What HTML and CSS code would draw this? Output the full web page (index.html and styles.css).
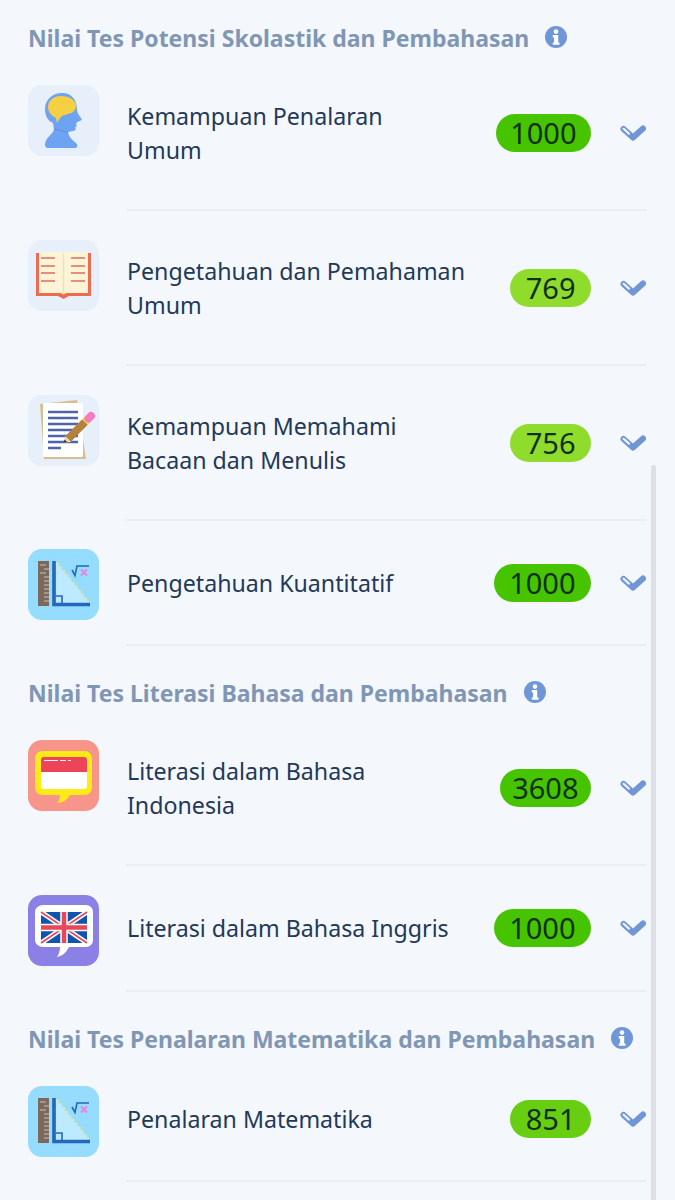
FILE: index.html
```html
<!DOCTYPE html>
<html lang="en">

<head>
	<meta charset="UTF-8">
	<title>Nilai Tes</title>
	<link rel="stylesheet" href="styles.css">
</head>

<body>
	<svg class="defs" width="0" height="0">
		<symbol id="chev" viewBox="0 0 26 18">
			<path d="M3.500 5 L13 13.500 L23 4.500" fill="none" stroke="#7096d6" stroke-width="6" stroke-linecap="round" stroke-linejoin="round"/>
			<path d="M3.600 4.800 L9 9.600" fill="none" stroke="#eef3fb" stroke-width="2.200" stroke-linecap="round"/>
		</symbol>
		<symbol id="info" viewBox="0 0 22 22">
			<circle cx="11" cy="11" r="11" fill="#6f97d8"/>
			<circle cx="11" cy="5.600" r="2.300" fill="#fff"/>
			<path d="M7.800 9h5.400v7.400h1.300v2.400H7.800v-2.400h1.300v-5H7.800z" fill="#fff"/>
		</symbol>
		<symbol id="math" viewBox="0 0 71 71">
			<rect width="71" height="71" rx="14" fill="#96dcff"/>
			<path d="M10 12h11v45H10z" fill="#7b6a5c"/>
			<path d="M12 16h6M16 20h5M12 24h6M16 28h5M16 32h5M16 36h5M16 40h5M16 44h5M16 48h5M16 52h5" stroke="#c9bfb4" stroke-width="1"/>
			<path d="M28 13 L62 55 H28z" fill="#bdeaff"/>
			<path d="M29 13 L61 53" stroke="#e2e89a" stroke-width="1.400" stroke-dasharray="3 2"/>
			<path d="M26 12v43.500h36" fill="none" stroke="#2467bd" stroke-width="3.600"/>
			<path d="M28 47h6v7" fill="none" stroke="#2467bd" stroke-width="1.600"/>
			<path d="M44 21l3 5.500 2-9.500h12" fill="none" stroke="#2467bd" stroke-width="1.600"/>
			<path d="M53 20.500l6 6M59 20.500l-6 6" stroke="#e884e0" stroke-width="2"/>
		</symbol>
	</svg>

	<div class="page">
		<h4 class="group-title">Nilai Tes Potensi Skolastik dan Pembahasan <svg class="info"><use href="#info"/></svg></h4>

		<div class="row">
			<svg class="icon" viewBox="0 0 71 71">
				<rect width="71" height="71" rx="14" fill="#e7effa"/>
				<path d="M34 8C24 8 17 15 17 24c0 7 3 12 8 14l1 6c-1 6-9 8-9 16 0 2 1 3 3 3h27c3 0 3-3 1-5-4-3-7-6-8-11l5-1c3 0 3-3 2-4 2 0 2-2 1-3 1-1 1-2 1-2l3-1c2-1 2-2 1-3-2-3-4-5-4-8C49 14 43 8 34 8z" fill="#6ea3f2"/>
				<path d="M33 11c-8 0-13 5-13 11 0 5 4 9 8 11l1 5 3-5c2-3 5-3 8-4 5-1 8-4 8-8 0-6-7-10-15-10z" fill="#f5d142"/>
				<path d="M26 44c5 1 10 3 14 3" fill="none" stroke="#5a8fdf" stroke-width="1"/>
			</svg>
			<div class="row-body">
				<div class="name">Kemampuan Penalaran<br>Umum</div>
				<span class="score w94 high">1000</span>
				<svg class="chev"><use href="#chev"/></svg>
			</div>
		</div>

		<div class="row">
			<svg class="icon" viewBox="0 0 71 71">
				<rect width="71" height="71" rx="14" fill="#e7effa"/>
				<path d="M8 13h3v39h49V13h3v43H41l-5.500 3-5.500-3H8z" fill="#ef6b4f"/>
				<path d="M11 12h23c1 0 1.500 1 1.500 2 0-1 .5-2 1.500-2h23v41H38l-2.500 1.500L33 53H11z" fill="#fdf3d6"/>
				<path d="M35.500 14v40" stroke="#efe1b6" stroke-width="1.500"/>
				<path d="M13 18h14M13 26h14M13 33h14M13 41h14M43 18h14M43 26h14M43 33h14M43 41h14" stroke="#d9705c" stroke-width="1.500"/>
			</svg>
			<div class="row-body">
				<div class="name">Pengetahuan dan Pemahaman<br>Umum</div>
				<span class="score mid">769</span>
				<svg class="chev"><use href="#chev"/></svg>
			</div>
		</div>

		<div class="row">
			<svg class="icon" viewBox="0 0 71 71">
				<rect width="71" height="71" rx="14" fill="#e7effa"/>
				<path d="M12 9l37-4 9 59-42 0z" fill="#d8bf8f"/>
				<rect x="15" y="8" width="40" height="54" rx="1.500" fill="#fff"/>
				<path d="M20 17h30M20 23h30M20 29h30M20 35h30M20 41h30M20 47h30M20 53h13" stroke="#4f64a8" stroke-width="2.600"/>
				<path d="M40 44L57 27" stroke="#b5813e" stroke-width="8"/>
				<path d="M57 27l3.500-3.500" stroke="#f4d33f" stroke-width="8"/>
				<path d="M60.500 23.500l2.500-2.500" stroke="#f47cc0" stroke-width="8" stroke-linecap="round"/>
				<path d="M36 47.500l1-6.500 6 6z" fill="#f1d7a8"/>
				<path d="M36 47.500l.5-3 2.500 2.500z" fill="#222"/>
			</svg>
			<div class="row-body">
				<div class="name">Kemampuan Memahami<br>Bacaan dan Menulis</div>
				<span class="score mid">756</span>
				<svg class="chev"><use href="#chev"/></svg>
			</div>
		</div>

		<div class="row">
			<svg class="icon"><use href="#math"/></svg>
			<div class="row-body">
				<div class="name">Pengetahuan Kuantitatif</div>
				<span class="score high">1000</span>
				<svg class="chev"><use href="#chev"/></svg>
			</div>
		</div>

		<h4 class="group-title">Nilai Tes Literasi Bahasa dan Pembahasan <svg class="info"><use href="#info"/></svg></h4>

		<div class="row">
			<svg class="icon" viewBox="0 0 71 71">
				<rect width="71" height="71" rx="14" fill="#f8958a"/>
				<path d="M15 11h41c5 0 8 3 8 8v28c0 5-3 8-8 8H42c-3 5-7 8-13 8 2-2 3-5 3-8H15c-5 0-8-3-8-8V19c0-5 3-8 8-8z" fill="#fdeb17"/>
				<path d="M16 17h40c2 0 3 1 3 3v12H13V20c0-2 1-3 3-3z" fill="#ed4459"/>
				<path d="M13 32h46v14c0 2-1 3-3 3H16c-2 0-3-1-3-3z" fill="#fff"/>
				<path d="M16 20.500h14M32 20.500h6M40 20.500h3" stroke="#fff" stroke-width="1"/>
			</svg>
			<div class="row-body">
				<div class="name">Literasi dalam Bahasa<br>Indonesia</div>
				<span class="score w91 high">3608</span>
				<svg class="chev"><use href="#chev"/></svg>
			</div>
		</div>

		<div class="row">
			<svg class="icon" viewBox="0 0 71 71">
				<rect width="71" height="71" rx="14" fill="#8a80e6"/>
				<path d="M15 10h43c4 0 7 3 7 7v28c0 4-3 7-7 7H41c-3 6-7 9-12 10 2-3 3-6 3-10H15c-4 0-8-3-8-7V17c0-4 4-7 8-7z" fill="#fff"/>
				<rect x="13" y="17" width="46" height="31" fill="#0f55ad"/>
				<path d="M13 17l46 31M59 17L13 48" stroke="#fff" stroke-width="5"/>
				<path d="M13 17l46 31M59 17L13 48" stroke="#e8475a" stroke-width="1.600"/>
				<path d="M36 17v31M13 32.500h46" stroke="#fff" stroke-width="7.500"/>
				<path d="M36 17v31M13 32.500h46" stroke="#e8475a" stroke-width="4.500"/>
			</svg>
			<div class="row-body">
				<div class="name">Literasi dalam Bahasa Inggris</div>
				<span class="score high">1000</span>
				<svg class="chev"><use href="#chev"/></svg>
			</div>
		</div>

		<h4 class="group-title">Nilai Tes Penalaran Matematika dan Pembahasan <svg class="info"><use href="#info"/></svg></h4>

		<div class="row">
			<svg class="icon"><use href="#math"/></svg>
			<div class="row-body">
				<div class="name">Penalaran Matematika</div>
				<span class="score good">851</span>
				<svg class="chev"><use href="#chev"/></svg>
			</div>
		</div>

		<div class="scrollbar"></div>
	</div>
</body>

</html>
```

FILE: styles.css
```css
html,
body {
	margin: 0;
	padding: 0;
	height: 100%;
	overflow: hidden;
}

body {
	background-color: #F4F7FB;
	font-family: "Noto Sans", "Open Sans", sans-serif;
	color: #22395A;
}

.defs {
	position: absolute;
}

.page {
	position: relative;
	height: 1200px;
	padding: 21px 29px 0 28px;
	box-sizing: border-box;
	overflow: hidden;
}

.group-title {
	display: flex;
	align-items: center;
	height: 34px;
	margin: 0 0 30px;
	font-size: 23px;
	font-weight: 700;
	color: #7F96B5;
	white-space: nowrap;
}

.row + .group-title {
	margin-top: 30px;
}

.info {
	width: 22px;
	height: 22px;
	margin-left: 16px;
	margin-top: -2px;
}

.row {
	display: flex;
	margin-bottom: 28.5px;
}

.row:has(+ .group-title) {
	margin-bottom: 0;
}

.icon {
	flex: none;
	width: 71px;
	height: 71px;
	margin-right: 27px;
}

.row-body {
	flex: 1;
	display: flex;
	align-items: center;
	align-self: flex-start;
	min-height: 96.83px;
	padding: 14px 0 42.25px;
	box-sizing: border-box;
	border-bottom: 2px solid #EAEEF3;
}

.name {
	flex: 1;
	padding-left: 1px;
	font-size: 23.2px;
	line-height: 34px;
}

.score {
	flex: none;
	height: 38px;
	padding: 0 15.5px;
	line-height: 37px;
	border-radius: 19px;
	font-size: 29px;
	color: #10301A;
}

.w94 {
	padding: 0 14.5px;
}

.w91 {
	padding: 0 12.5px;
}

.high {
	background-color: #46C400;
}

.good {
	background-color: #67CE12;
}

.mid {
	background-color: #8FDC2C;
}

.chev {
	flex: none;
	width: 26px;
	height: 18px;
	margin-left: 29px;
}

.scrollbar {
	position: absolute;
	right: 19px;
	top: 465px;
	bottom: 0;
	width: 5px;
	background-color: #DDDFE4;
	border-radius: 3px 3px 0 0;
}
```
